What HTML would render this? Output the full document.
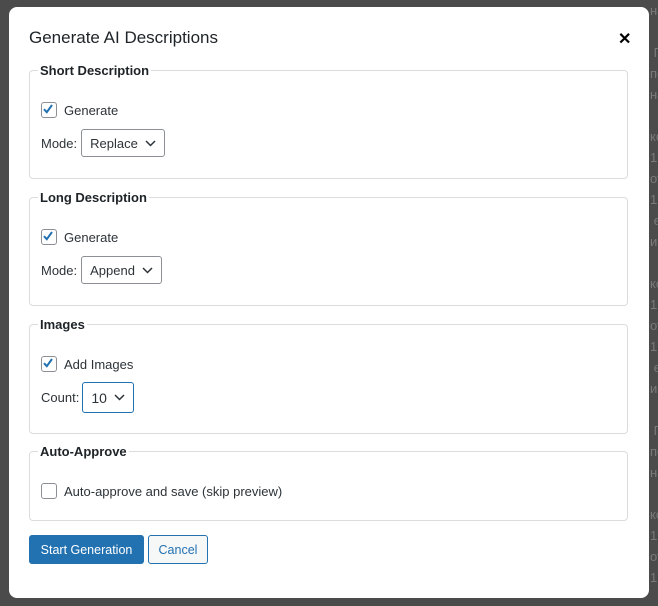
<!DOCTYPE html>
<html><head><meta charset="utf-8"><style>
body{margin:0;width:658px;height:606px;background:#4b4b4b;font-family:"Liberation Sans",sans-serif;overflow:hidden;position:relative;color:#2c3338}
.bg{position:absolute;left:650px;top:0;color:#7a7a7a;font-size:13px;line-height:21px;white-space:pre}
.m{position:absolute;left:9px;top:7px;width:640px;height:591px;background:#fff;border-radius:8px}
h1{position:absolute;left:20px;top:21px;margin:0;font-size:17px;font-weight:normal;color:#1d2327}
.x{position:absolute;left:609px;top:22px;font-size:16px;color:#000;font-weight:bold}
fieldset{position:absolute;left:20px;width:599px;border:1px solid #dcdcde;border-radius:4px;margin:0;padding:0;box-sizing:border-box}
legend{font-weight:bold;font-size:13px;padding:0 2px;margin-left:8px;color:#1d2327}
.row{position:absolute;left:11px;font-size:13px;display:flex;align-items:center;white-space:nowrap}
.cb{width:14px;height:14px;border:1px solid #8c8f94;border-radius:3px;margin-right:7px;position:relative;background:#fff}
.sel{border:1px solid #8c8f94;border-radius:3px;height:28px;box-sizing:border-box;padding:0 8px;display:flex;align-items:center;margin-left:4px;font-size:13px}
.sel svg{margin-left:7px}
.btn{position:absolute;top:528px;height:29px;box-sizing:border-box;border-radius:3px;font-size:12.5px;display:flex;align-items:center;justify-content:center;white-space:nowrap}
</style></head><body>
<div class="bg">на

 П
по
на

ко
1 
от
1 
 е
ик

ко
1 
от
1 
 е
ик

 П
по
на

ко
1 
от
1 </div>
<div class="m">
<h1>Generate AI Descriptions</h1>
<div class="x">✕</div>

<fieldset style="top:56px;height:116px"><legend>Short Description</legend>
<div class="row" style="top:24px"><span class="cb"><svg width="14" height="14" style="position:absolute;left:-1px;top:-1px" viewBox="0 0 14 14"><path d="M3 7.2l2.8 3L11 3" stroke="#2271b1" stroke-width="2" fill="none"/></svg></span>Generate</div>
<div class="row" style="top:51px">Mode:<span class="sel">Replace<svg width="11" height="7" viewBox="0 0 11 7"><path d="M1 1l4.5 4.5L10 1" stroke="#2c3338" stroke-width="1.5" fill="none"/></svg></span></div>
</fieldset>

<fieldset style="top:183px;height:116px"><legend>Long Description</legend>
<div class="row" style="top:24px"><span class="cb"><svg width="14" height="14" style="position:absolute;left:-1px;top:-1px" viewBox="0 0 14 14"><path d="M3 7.2l2.8 3L11 3" stroke="#2271b1" stroke-width="2" fill="none"/></svg></span>Generate</div>
<div class="row" style="top:51px">Mode:<span class="sel">Append<svg width="11" height="7" viewBox="0 0 11 7"><path d="M1 1l4.5 4.5L10 1" stroke="#2c3338" stroke-width="1.5" fill="none"/></svg></span></div>
</fieldset>

<fieldset style="top:310px;height:117px"><legend>Images</legend>
<div class="row" style="top:24px"><span class="cb"><svg width="14" height="14" style="position:absolute;left:-1px;top:-1px" viewBox="0 0 14 14"><path d="M3 7.2l2.8 3L11 3" stroke="#2271b1" stroke-width="2" fill="none"/></svg></span>Add Images</div>
<div class="row" style="top:50px">Count:<span class="sel" style="border:1.5px solid #2271b1;height:31px;font-size:14px;margin-left:3px">10<svg width="11" height="7" viewBox="0 0 11 7"><path d="M1 1l4.5 4.5L10 1" stroke="#2c3338" stroke-width="1.5" fill="none"/></svg></span></div>
</fieldset>

<fieldset style="top:437px;height:77px"><legend>Auto-Approve</legend>
<div class="row" style="top:24px"><span class="cb"></span>Auto-approve and save (skip preview)</div>
</fieldset>

<div class="btn" style="left:20px;background:#2271b1;color:#fff;width:115px">Start Generation</div>
<div class="btn" style="left:139px;background:#f6f7f7;color:#2271b1;border:1px solid #2271b1;width:60px">Cancel</div>
</div>
</body></html>
